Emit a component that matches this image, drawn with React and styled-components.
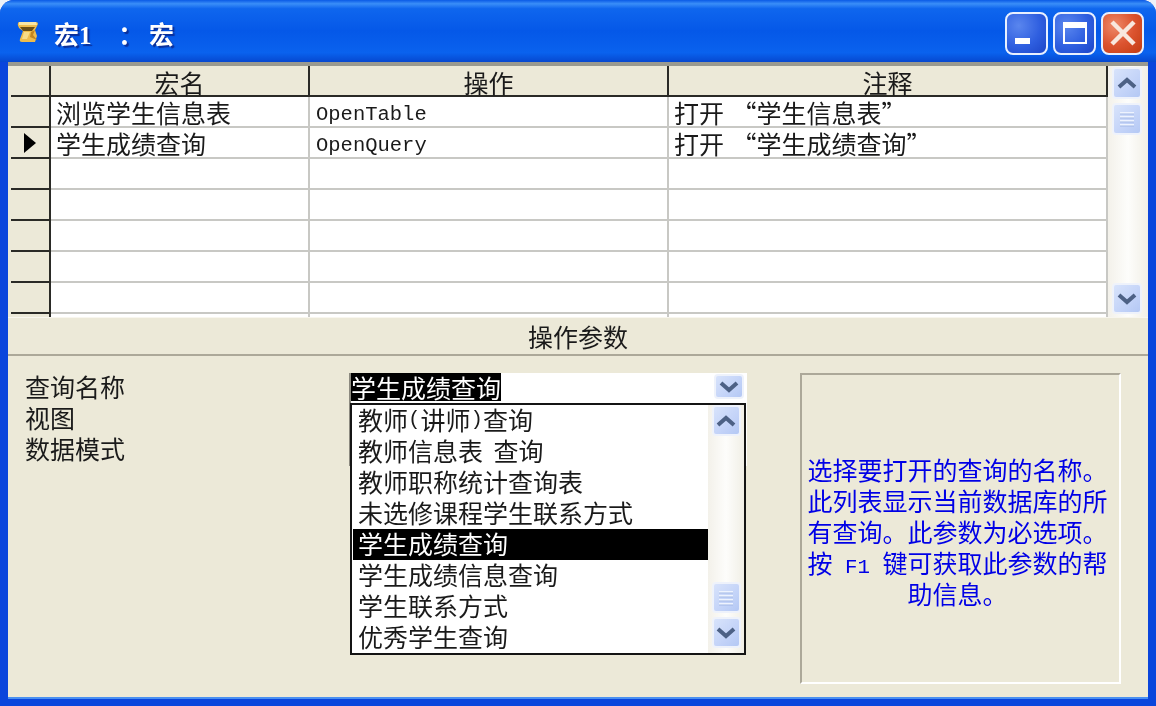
import React from 'react';
import styled, { createGlobalStyle } from 'styled-components';

const cjk = '"Noto Sans CJK SC", "Liberation Sans", sans-serif';
const mono = '"Liberation Mono", "Noto Sans CJK SC", monospace';

const GlobalStyle = createGlobalStyle`
  html, body {
    margin: 0;
    padding: 0;
    background: #eef2f8;
    overflow: hidden;
  }
`;

const Window = styled.div`
  width: 1156px;
  height: 706px;
  box-sizing: border-box;
  display: flex;
  flex-direction: column;
  border-radius: 14px 14px 0 0;
  background: #0a45dc;
  font-family: ${cjk};
  font-size: 25px;
  line-height: 25px;
  color: #1a1a1a;
  overflow: hidden;
  filter: blur(0.45px);
`;

const TitleBar = styled.div`
  height: 62px;
  flex: none;
  display: flex;
  align-items: center;
  padding: 4px 12px 0 17px;
  box-sizing: border-box;
  background: linear-gradient(180deg, #0a5ae6 0%, #3a8ef8 6%, #0f66ee 14%, #0558e8 50%, #0a62ee 85%, #0648d0 100%);
`;

const TitleIcon = styled.svg`
  margin-top: -3px;
  flex: none;
`;

const TitleText = styled.div`
  margin: 3px 0 0 15px;
  font-size: 25px;
  font-weight: 700;
  color: #fff;
  white-space: pre;
  text-shadow: 2px 2px 1px #0a2f9a;
`;

const TitleDigit = styled.span`
  font-family: "Liberation Serif", serif;
`;

const TitleColon = styled.span`
  margin-left: 21px;
`;

const Controls = styled.div`
  margin-left: auto;
  display: flex;
  gap: 5px;
`;

const ControlButton = styled.div`
  width: 43px;
  height: 43px;
  box-sizing: border-box;
  border: 2px solid #e8f0ff;
  border-radius: 8px;
  display: flex;
  align-items: center;
  justify-content: center;
  background: ${p => p.$close
    ? 'radial-gradient(circle at 30% 30%, #ee8a6a 0%, #dc5430 50%, #c23a10 100%)'
    : 'radial-gradient(circle at 30% 30%, #5a86ee 0%, #2f5fe0 55%, #1c45c8 100%)'};
`;

const Client = styled.div`
  flex: 1;
  min-height: 0;
  display: flex;
  flex-direction: column;
  margin: 0 8px 9px 8px;
  background: #ece9d8;
  border-top: 4px solid #9a9a90;
  box-shadow: 0 2px 0 #4a90f0;
`;

const GridArea = styled.div`
  height: 251px;
  flex: none;
  display: flex;
  padding-left: 3px;
`;

const Table = styled.div`
  width: 1097px;
  overflow: hidden;
  display: grid;
  grid-template-columns: 40px 259px 359px 439px;
  grid-auto-rows: 31px;
  background: #fff;
`;

const HeaderCell = styled.div`
  box-sizing: border-box;
  background: #ece9d8;
  border-right: 2px solid #2a2a26;
  border-bottom: 2px solid #2a2a26;
  display: flex;
  align-items: center;
  justify-content: center;
  padding-top: 3px;
`;

const RowHead = styled.div`
  box-sizing: border-box;
  background: #ece9d8;
  border-right: 2px solid #2a2a26;
  border-bottom: 2px solid #2a2a26;
  display: flex;
  align-items: center;
  justify-content: center;
`;

const Cell = styled.div`
  box-sizing: border-box;
  display: flex;
  align-items: center;
  border-right: 2px solid #c8c8c4;
  border-bottom: 2px solid #c8c8c4;
  padding: ${p => (p.$mono ? '6px 0 0 6px' : '2px 0 0 5px')};
  white-space: pre;
  word-spacing: 2px;
  font-family: ${p => (p.$mono ? mono : cjk)};
  font-size: ${p => (p.$mono ? '20.5px' : '25px')};
  line-height: ${p => (p.$mono ? '21px' : '25px')};
`;

const ScrollTrack = styled.div`
  box-sizing: border-box;
  display: flex;
  flex-direction: column;
  align-items: center;
  width: ${p => p.$width}px;
  padding: ${p => p.$pad};
  background: linear-gradient(90deg, #f3f1ea 0%, #fdfdfb 50%, #f1efe6 100%);
`;

const ScrollButton = styled.div`
  box-sizing: border-box;
  width: ${p => p.$width || 30}px;
  height: ${p => p.$height || 31}px;
  flex: none;
  display: flex;
  align-items: center;
  justify-content: center;
  border: 2px solid #eef2fb;
  border-radius: 4px;
  background: linear-gradient(135deg, #d8e3fb 0%, #c3d3f8 60%, #b4c8f4 100%);
  margin-top: ${p => p.$top || 0}px;
`;

const SectionBar = styled.div`
  height: 39px;
  flex: none;
  box-sizing: border-box;
  border-top: 1px solid #f8f6ee;
  border-bottom: 2px solid #aca899;
  display: flex;
  align-items: center;
  justify-content: center;
`;

const Lower = styled.div`
  flex: 1;
  min-height: 0;
  display: flex;
  box-sizing: border-box;
  padding: 17px 27px 13px 17px;
`;

const Labels = styled.div`
  width: 324px;
  flex: none;
`;

const Label = styled.div`
  height: 31px;
  box-sizing: border-box;
  padding-bottom: 4px;
  display: flex;
  align-items: center;
`;

const Fields = styled.div`
  width: 451px;
  flex: none;
  position: relative;
`;

const Field = styled.div`
  box-sizing: border-box;
  height: 31px;
  width: 398px;
  display: flex;
  align-items: flex-start;
  background: #fff;
  border-left: 2px solid #8c8a80;
`;

const Selection = styled.span`
  background: #000;
  color: #fff;
  height: 28px;
  line-height: 28px;
`;

const ComboArrow = styled(ScrollButton)`
  margin-left: auto;
  margin-top: 1px;
  margin-right: 3px;
`;

const Dropdown = styled.div`
  position: absolute;
  top: 30px;
  left: 1px;
  width: 396px;
  height: 252px;
  box-sizing: border-box;
  display: flex;
  background: #fff;
  border: 2px solid #141414;
`;

const List = styled.div`
  flex: 1;
  padding-left: 1px;
`;

const ListItem = styled.div`
  height: 31px;
  box-sizing: border-box;
  display: flex;
  align-items: center;
  padding: 0 0 2px 5px;
  white-space: pre;
  word-spacing: 5px;
  background: ${p => (p.$active ? '#000' : 'transparent')};
  color: ${p => (p.$active ? '#fff' : 'inherit')};
`;

const HelpBox = styled.div`
  flex: 1;
  box-sizing: border-box;
  display: flex;
  flex-direction: column;
  align-items: center;
  justify-content: center;
  padding: 6px 6px 0 0;
  border: 2px solid;
  border-color: #aca899 #fff #fff #aca899;
  color: #0000e6;
`;

const HelpLine = styled.div`
  width: 300px;
  height: 31px;
  line-height: 31px;
  text-align: center;
  white-space: pre;
`;

const Latin = styled.span`
  font-family: ${mono};
  font-size: 20.8px;
`;

const Chevron = ({ up }) => (
  <svg width="22" height="14" viewBox="0 0 22 14">
    <path
      d={up ? 'M3 11 L11 4 L19 11' : 'M3 3 L11 10 L19 3'}
      fill="none"
      stroke="#4d6185"
      strokeWidth="4"
    />
  </svg>
);

const Grip = () => (
  <svg width="16" height="16" viewBox="0 0 16 16">
    <path d="M1 2H15M1 6H15M1 10H15M1 14H15" stroke="#eef3fe" strokeWidth="2" />
    <path d="M1 3H15M1 7H15M1 11H15M1 15H15" stroke="#a3b8e6" strokeWidth="1" />
  </svg>
);

const ScrollIcon = () => (
  <TitleIcon width="22" height="22" viewBox="0 0 22 22">
    <path d="M1 2 Q1 1 3 1 H19 Q21 1 21 3 L18 9 L20 15 L18 21 H5 Q2 21 3 18 L6 10 L2 7 Q0 4 1 2 Z" fill="#eebc4c" />
    <path d="M2 1 H19 L20 4 H2 Z" fill="#f8e6a4" />
    <path d="M3 6 H18 L15 10 H6 Z" fill="#6a4e14" />
    <path d="M7 11 H13 L10 18 H5 Z" fill="#f8dc88" />
    <path d="M14 11 L18 9 L16 14 L20 19 L13 16 Z" fill="#c48620" />
  </TitleIcon>
);

const rows = [
  { name: '浏览学生信息表', action: 'OpenTable', note: '打开 “学生信息表”' },
  { name: '学生成绩查询', action: 'OpenQuery', note: '打开 “学生成绩查询”', current: true },
  {}, {}, {}, {}, {}, {},
];

const queries = [
  <>教师<Latin>(</Latin>讲师<Latin>)</Latin>查询</>,
  '教师信息表 查询',
  '教师职称统计查询表',
  '未选修课程学生联系方式',
  '学生成绩查询',
  '学生成绩信息查询',
  '学生联系方式',
  '优秀学生查询',
];

const App = () => (
  <Window>
    <GlobalStyle />
    <TitleBar>
      <ScrollIcon />
      <TitleText>宏<TitleDigit>1</TitleDigit><TitleColon> ：</TitleColon> 宏</TitleText>
      <Controls>
        <ControlButton>
          <svg width="26" height="26" viewBox="0 0 26 26">
            <rect x="1" y="18" width="15" height="6" fill="#fff" />
          </svg>
        </ControlButton>
        <ControlButton>
          <svg width="26" height="26" viewBox="0 0 26 26">
            <path d="M2 3H24V23H2Z" fill="none" stroke="#fff" strokeWidth="2" />
            <rect x="2" y="3" width="22" height="5" fill="#fff" />
          </svg>
        </ControlButton>
        <ControlButton $close>
          <svg width="26" height="26" viewBox="0 0 26 26">
            <path d="M2 2L24 24M24 2L2 24" stroke="#f8e8de" strokeWidth="4.5" />
          </svg>
        </ControlButton>
      </Controls>
    </TitleBar>
    <Client>
      <GridArea>
        <Table>
          <HeaderCell />
          <HeaderCell>宏名</HeaderCell>
          <HeaderCell>操作</HeaderCell>
          <HeaderCell>注释</HeaderCell>
          {rows.map((row, index) => (
            <React.Fragment key={index}>
              <RowHead>
                {row.current && (
                  <svg width="14" height="20" viewBox="0 0 14 20">
                    <path d="M1 0 L13 10 L1 20 Z" fill="#000" />
                  </svg>
                )}
              </RowHead>
              <Cell>{row.name}</Cell>
              <Cell $mono>{row.action}</Cell>
              <Cell>{row.note}</Cell>
            </React.Fragment>
          ))}
        </Table>
        <ScrollTrack $width={40} $pad="1px 2px 0 0">
          <ScrollButton $height={32}><Chevron up /></ScrollButton>
          <ScrollButton $height={32} $top={4}><Grip /></ScrollButton>
          <ScrollButton $top={148}><Chevron /></ScrollButton>
        </ScrollTrack>
      </GridArea>
      <SectionBar>操作参数</SectionBar>
      <Lower>
        <Labels>
          <Label>查询名称</Label>
          <Label>视图</Label>
          <Label>数据模式</Label>
        </Labels>
        <Fields>
          <Field>
            <Selection>学生成绩查询</Selection>
            <ComboArrow $height={25}><Chevron /></ComboArrow>
          </Field>
          <Field />
          <Field />
          <Dropdown>
            <List>
              {queries.map((query, index) => (
                <ListItem key={index} $active={index === 4}>{query}</ListItem>
              ))}
            </List>
            <ScrollTrack $width={36} $pad="0">
              <ScrollButton $width={29}><Chevron up /></ScrollButton>
              <ScrollButton $width={29} $top={146}><Grip /></ScrollButton>
              <ScrollButton $width={29} $top={4}><Chevron /></ScrollButton>
            </ScrollTrack>
          </Dropdown>
        </Fields>
        <HelpBox>
          <HelpLine>选择要打开的查询的名称。</HelpLine>
          <HelpLine>此列表显示当前数据库的所</HelpLine>
          <HelpLine>有查询。此参数为必选项。</HelpLine>
          <HelpLine>按<Latin> F1 </Latin>键可获取此参数的帮</HelpLine>
          <HelpLine>助信息。</HelpLine>
        </HelpBox>
      </Lower>
    </Client>
  </Window>
);

export default App;
